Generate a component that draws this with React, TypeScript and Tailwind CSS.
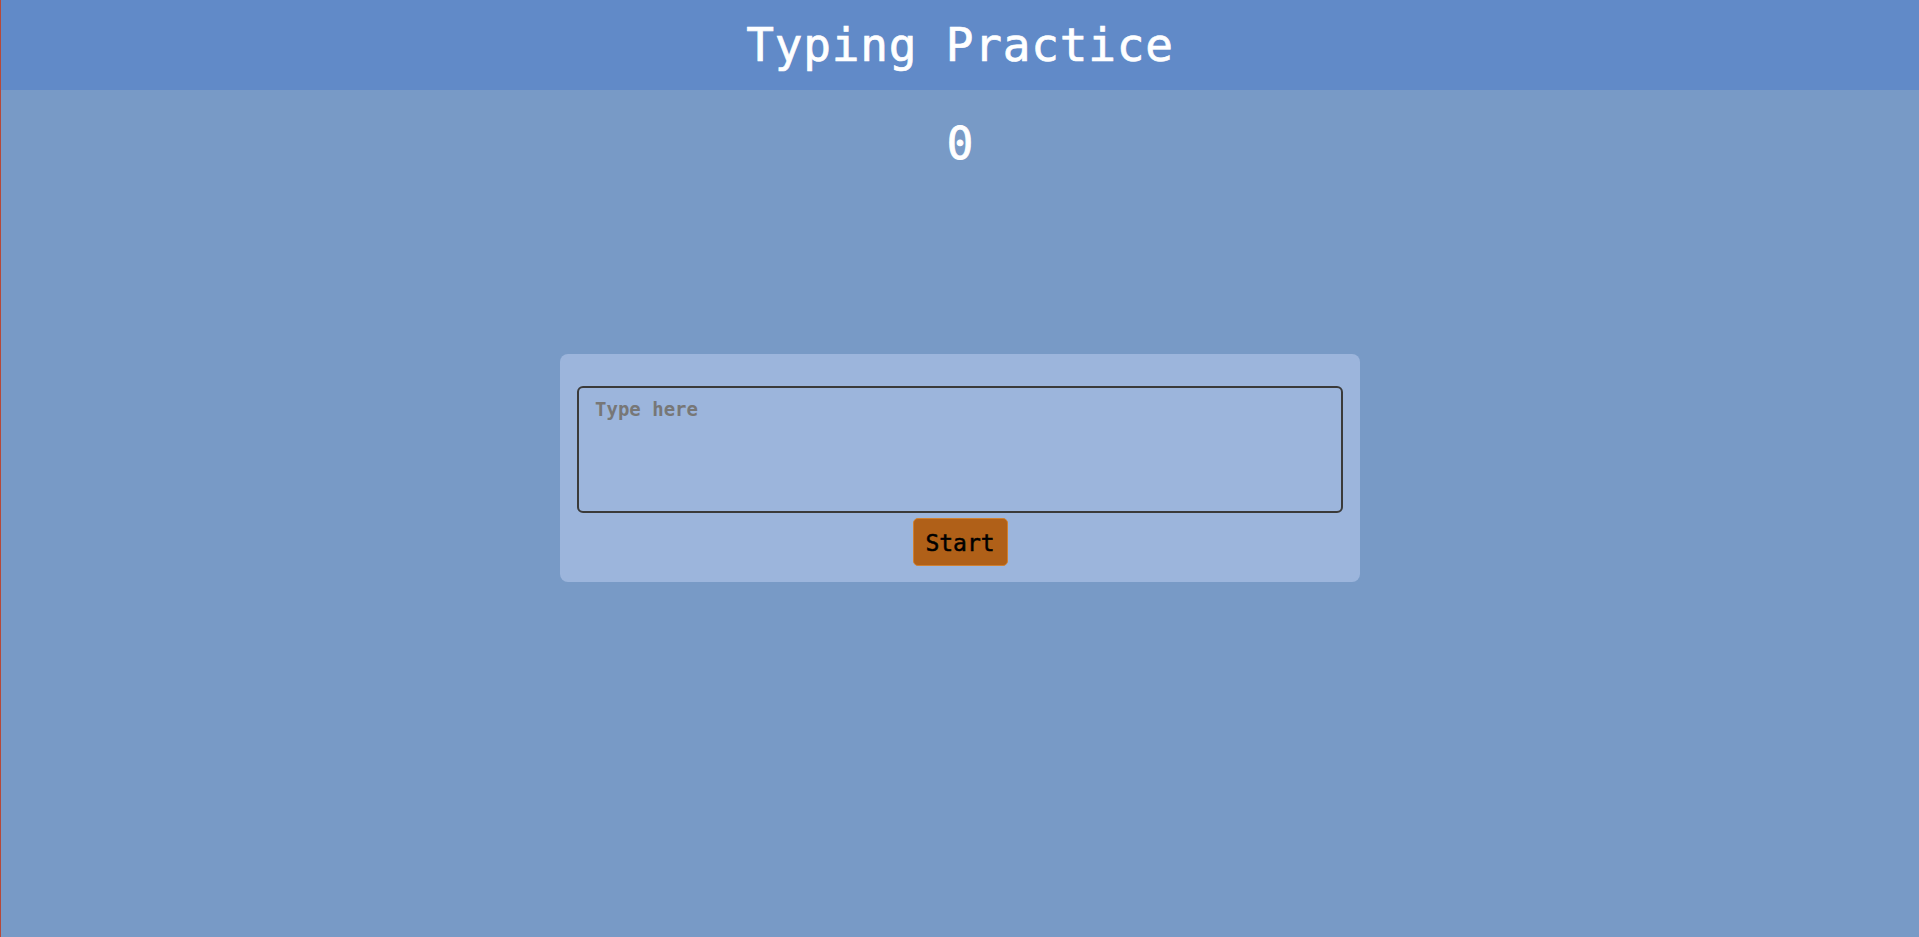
import React from 'react';

const mono = { fontFamily: '"DejaVu Sans Mono", "Liberation Mono", monospace' };

const App: React.FC = () => {
  return (
    <div className="min-h-screen w-full bg-[#789ac6] border-l border-[#b5493a]" style={mono}>
      {/* Header */}
      <header className="h-[90px] bg-[#618ac8] flex items-center justify-center">
        <h1 className="text-[46px] tracking-[0.8px] text-white font-normal [-webkit-text-stroke:0.7px_white]">
          Typing Practice
        </h1>
      </header>

      {/* Score */}
      <div className="text-center text-white text-[44px] font-normal [-webkit-text-stroke:0.9px_white] leading-[66px] mt-[21px]">
        0
      </div>

      {/* Practice card */}
      <div className="w-[800px] mx-auto mt-[177px] bg-[#9cb5dc] rounded-lg px-[17px] pt-[32px] pb-[16px] flex flex-col items-center">
        <textarea
          placeholder="Type here"
          className="w-full h-[127px] resize-none bg-transparent border-2 border-[#3a3a3a] rounded-md px-[16px] py-[7px] text-[19px] font-bold text-black placeholder:text-[#777777] outline-none"
          style={mono}
        />
        <button
          className="mt-[5px] w-[95px] h-[48px] bg-[#b06018] border border-[#d08030] rounded-[5px] text-[23px] text-black font-normal [-webkit-text-stroke:0.5px_black] pt-[2px]"
          style={mono}
        >
          Start
        </button>
      </div>
    </div>
  );
};

export default App;
